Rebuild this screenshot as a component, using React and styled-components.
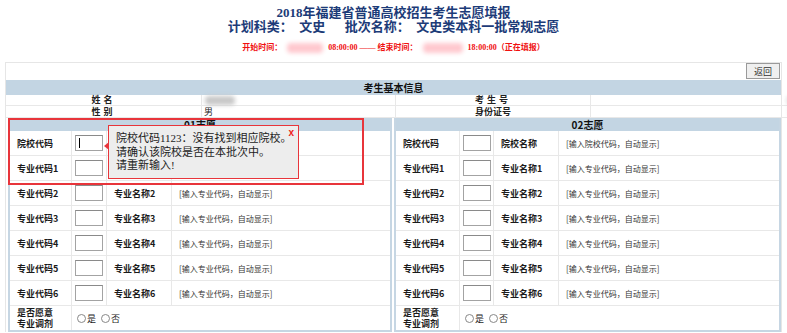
import React from "react";
import styled, { createGlobalStyle } from "styled-components";

const GlobalStyle = createGlobalStyle`
  body {
    margin: 0;
    background: #fff;
    font-family: "Liberation Serif", "Noto Sans CJK SC", serif;
    color: #222;
  }
`;

const Page = styled.div`
  width: 787px;
  height: 333px;
  overflow: hidden;
  position: relative;
`;

const Head = styled.div`
  display: flex;
  flex-direction: column;
  align-items: center;
  padding-top: 5px;
  color: #1c3b78;
  font-weight: bold;
`;

const Title = styled.div`
  font-size: 13px;
  line-height: 15px;
`;

const Plan = styled.div`
  font-size: 13px;
  line-height: 14px;
  white-space: pre;
`;

const TimeLine = styled.div`
  margin-top: 8px;
  display: flex;
  align-items: center;
  gap: 2px;
  color: #f01010;
  font-size: 8px;
  line-height: 12px;
  height: 12px;
`;

const Blur = styled.span`
  display: inline-block;
  width: ${(p) => p.$w}px;
  height: ${(p) => p.$h}px;
  background: ${(p) => p.$c};
  filter: blur(2px);
  border-radius: 4px;
  margin: ${(p) => p.$m || "0 3px"};
`;

const Frame = styled.div`
  margin: 8px 5px 0 5px;
  border: 1px solid #e6e6e6;
  border-bottom: none;
  position: relative;
`;

const Toolbar = styled.div`
  height: 17px;
  display: flex;
  justify-content: flex-end;
  align-items: flex-start;
  padding-right: 1px;
`;

const BackButton = styled.button`
  width: 34px;
  height: 16px;
  padding: 0;
  border: 1px solid #9a9a9a;
  background: #efefef;
  font-family: "Noto Sans CJK SC", sans-serif;
  font-size: 9px;
  color: #333;
`;

const Bar = styled.div`
  height: ${(p) => p.$h || 15}px;
  background: #c3d5e3;
  display: flex;
  align-items: center;
  justify-content: center;
  font-weight: bold;
  font-size: 10px;
  color: #111;
  font-family: "Noto Sans CJK SC", sans-serif;
`;

const InfoGrid = styled.div`
  display: grid;
  grid-template-columns: 195px 194px 195px 1fr;
  grid-template-rows: 11px 12px;
  font-family: "Noto Sans CJK SC", sans-serif;
  font-size: 9px;
`;

const InfoCell = styled.div`
  display: flex;
  align-items: center;
  justify-content: ${(p) => (p.$label ? "center" : "flex-start")};
  font-weight: ${(p) => (p.$label ? "bold" : "normal")};
  padding-left: ${(p) => (p.$label ? 0 : 2)}px;
  border-bottom: 1px solid #e8e8e8;
  border-left: ${(p) => (p.$sep ? "1px solid #e8e8e8" : "none")};
  letter-spacing: ${(p) => (p.$spaced ? "3px" : "0")};
  line-height: 10px;
`;

const Panels = styled.div`
  display: grid;
  grid-template-columns: 384px 1fr;
  gap: 2px;
  padding: 0 0 0 2px;
`;

const Panel = styled.div`
  border: 2px solid #c6d6e3;
  border-top: none;
  height: 212px;
  overflow: hidden;
`;

const Row = styled.div`
  display: grid;
  grid-template-columns: ${(p) => (p.$right ? "64px 34px 65px 1fr" : "62px 35px 65px 1fr")};
  height: 25px;
  border-bottom: 1px solid #e8e8e8;
  box-sizing: border-box;
  &:last-child {
    border-bottom: none;
    height: 24px;
  }
`;

const Cell = styled.div`
  display: flex;
  align-items: center;
  padding-left: ${(p) => p.$pad ?? 7}px;
  border-right: ${(p) => (p.$last ? "none" : "1px solid #e8e8e8")};
  font-family: "Noto Sans CJK SC", sans-serif;
  font-size: ${(p) => (p.$hint ? 8 : 9)}px;
  font-weight: ${(p) => (p.$hint ? "normal" : "bold")};
  color: ${(p) => (p.$hint ? "#333" : "#1a1a1a")};
  line-height: 11px;
`;

const CodeInput = styled.div`
  width: 26px;
  height: 14px;
  border: 1px solid #a3a3a3;
  border-top-color: #8a8a8a;
  background: #fff;
  position: relative;
  &::after {
    content: "";
    display: ${(p) => (p.$focus ? "block" : "none")};
    position: absolute;
    left: 3px;
    top: 2px;
    width: 1px;
    height: 10px;
    background: #000;
  }
`;

const Radio = styled.span`
  display: inline-flex;
  align-items: center;
  gap: 1px;
  margin-right: 5px;
  font-weight: normal;
  font-size: 9px;
  &::before {
    content: "";
    width: 7px;
    height: 7px;
    border: 1px solid #888;
    border-radius: 50%;
  }
`;

const Highlight = styled.div`
  position: absolute;
  left: 2px;
  top: 55px;
  width: 352px;
  height: 63px;
  border: 2px solid #e8353b;
  pointer-events: none;
`;

const Tip = styled.div`
  position: absolute;
  left: 102px;
  top: 62px;
  width: 182px;
  height: 46px;
  padding: 6px 0 0 7px;
  background: #ededed;
  border: 1px solid #e8353b;
  font-family: "Liberation Serif", "Noto Sans CJK SC", sans-serif;
  font-size: 11px;
  line-height: 13.5px;
  white-space: nowrap;
  color: #222;
  &::before {
    content: "";
    position: absolute;
    left: -5px;
    top: 16px;
    border-style: solid;
    border-width: 4px 5px 4px 0;
    border-color: transparent #e8353b transparent transparent;
  }
`;

const Close = styled.span`
  position: absolute;
  right: 4px;
  top: 0px;
  color: #f02020;
  font-family: "Liberation Sans", sans-serif;
  font-weight: bold;
  font-size: 10px;
`;

const hint = (i) => (i === 0 ? "[输入院校代码，自动显示]" : "[输入专业代码，自动显示]");

const FormPanel = ({ title, right }) => {
  const rows = Array.from({ length: 7 }, (_, i) => i);
  return (
    <Panel>
      <Bar $h={13}>{title}</Bar>
      {rows.map((i) => (
        <Row key={i} $right={right}>
          <Cell>{i === 0 ? "院校代码" : `专业代码${i}`}</Cell>
          <Cell $pad={3}>
            <CodeInput $focus={!right && i === 0} />
          </Cell>
          <Cell>{i === 0 ? "院校名称" : `专业名称${i}`}</Cell>
          <Cell $hint $last>
            {hint(i)}
          </Cell>
        </Row>
      ))}
      <Row $right={right}>
        <Cell>
          是否愿意
          <br />
          专业调剂
        </Cell>
        <Cell $last $pad={5} style={{ gridColumn: "2 / 5" }}>
          <Radio>是</Radio>
          <Radio>否</Radio>
        </Cell>
      </Row>
    </Panel>
  );
};

export default function App() {
  return (
    <Page>
      <GlobalStyle />
      <Head>
        <Title>2018年福建省普通高校招生考生志愿填报</Title>
        <Plan>{"计划科类：  文史      批次名称：  文史类本科一批常规志愿"}</Plan>
        <TimeLine>
          <span>开始时间：</span>
          <Blur $w={36} $h={10} $c="#ffc9cf" />
          <span>08:00:00 —— 结束时间：</span>
          <Blur $w={40} $h={10} $c="#ffc9cf" />
          <span>18:00:00（正在填报）</span>
        </TimeLine>
      </Head>
      <Frame>
        <Toolbar>
          <BackButton>返回</BackButton>
        </Toolbar>
        <Bar>考生基本信息</Bar>
        <InfoGrid>
          <InfoCell $label $spaced>姓名</InfoCell>
          <InfoCell $sep>
            <Blur $w={30} $h={9} $c="#c8c8c8" $m="0 0 0 1px" />
          </InfoCell>
          <InfoCell $label $sep $spaced>考生号</InfoCell>
          <InfoCell $sep>
            <Blur $w={60} $h={9} $c="#d4d4d4" $m="0 0 0 194px" />
          </InfoCell>
          <InfoCell $label $spaced>性别</InfoCell>
          <InfoCell $sep>男</InfoCell>
          <InfoCell $label $sep>身份证号</InfoCell>
          <InfoCell $sep>
            <Blur $w={74} $h={11} $c="#dadada" $m="0 0 0 196px" />
          </InfoCell>
        </InfoGrid>
        <Panels>
          <FormPanel title="01志愿" />
          <FormPanel title="02志愿" right />
        </Panels>
        <Highlight />
        <Tip>
          院校代码1123：没有找到相应院校。
          <br />
          请确认该院校是否在本批次中。
          <br />
          请重新输入!
          <Close>x</Close>
        </Tip>
      </Frame>
    </Page>
  );
}
